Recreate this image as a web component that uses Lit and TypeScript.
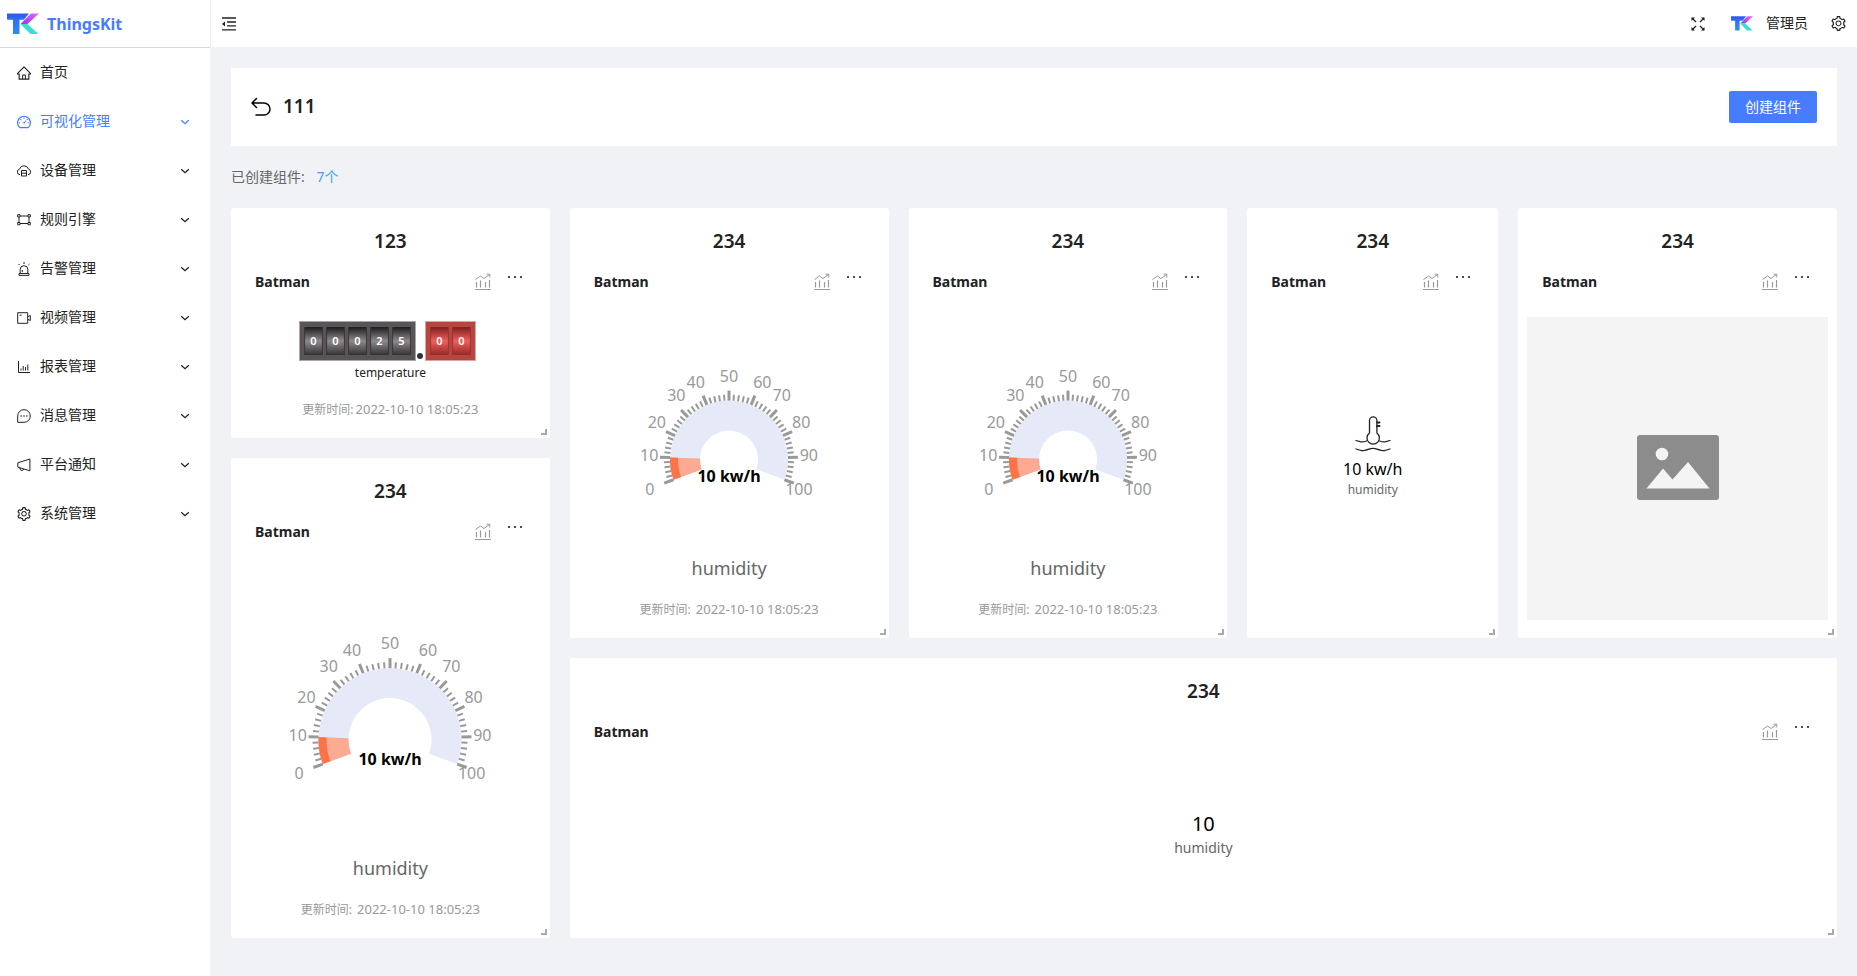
import { LitElement, html, svg, css, nothing } from "lit";
import { customElement, property } from "lit/decorators.js";

const VB = "64 64 896 896";
const P: Record<string, string> = {
  home: "M946.5 505L560.1 118.8l-25.9-25.9a31.5 31.5 0 00-44.4 0L77.5 505a63.9 63.9 0 00-18.8 46c.4 35.2 29.7 63.3 64.9 63.3h42.5V940h691.8V614.3h43.4c17.1 0 33.2-6.7 45.3-18.8a63.6 63.6 0 0018.7-45.3c0-17-6.7-33.1-18.8-45.2zM568 868H456V664h112v204zm217.9-325.7V868H632V640c0-22.1-17.9-40-40-40H432c-22.1 0-40 17.9-40 40v228H238.1V542.3h-96l370-369.7 23.1 23.1L882 542.3h-96.1z",
  dash: "M924.8 385.6a446.7 446.7 0 00-96-142.4 446.7 446.7 0 00-142.4-96C631.1 123.8 572.5 112 512 112s-119.1 11.8-174.4 35.2a446.7 446.7 0 00-142.4 96 446.7 446.7 0 00-96 142.4C75.8 440.9 64 499.5 64 560c0 132.7 58.3 257.7 159.9 343.1l1.7 1.4c5.8 4.8 13.1 7.5 20.6 7.5h531.7c7.5 0 14.8-2.7 20.6-7.5l1.7-1.4C901.7 817.7 960 692.7 960 560c0-60.5-11.900-119.100-35.200-174.400zM761.400 836H262.600A371.120 371.120 0 01140 560c0-99.400 38.700-192.800 109-263 70.300-70.300 163.700-109 263-109 99.400 0 192.800 38.700 263 109 70.300 70.300 109 163.700 109 263 0 105.600-44.500 205.500-122.600 276zM623.500 421.500a8.030 8.030 0 00-11.300 0L527.700 506c-18.700-5-39.400-.2-54.100 14.500a55.950 55.950 0 000 79.200 55.950 55.950 0 0079.200 0 55.870 55.870 0 0014.500-54.100l84.500-84.500c3.100-3.100 3.100-8.200 0-11.300l-28.300-28.300zM490 320h44c4.400 0 8-3.600 8-8v-80c0-4.400-3.600-8-8-8h-44c-4.400 0-8 3.600-8 8v80c0 4.400 3.600 8 8 8zm260 218v44c0 4.400 3.600 8 8 8h80c4.400 0 8-3.600 8-8v-44c0-4.400-3.600-8-8-8h-80c-4.400 0-8 3.600-8 8zm12.700-197.200l-31.100-31.100a8.030 8.030 0 00-11.300 0l-56.600 56.600a8.030 8.030 0 000 11.300l31.100 31.100c3.100 3.100 8.200 3.100 11.300 0l56.600-56.600c3.100-3.100 3.100-8.200 0-11.300zm-458.600-31.100a8.030 8.030 0 00-11.300 0l-31.100 31.100a8.030 8.030 0 000 11.300l56.600 56.600c3.100 3.100 8.200 3.100 11.300 0l31.100-31.100c3.100-3.100 3.100-8.200 0-11.300l-56.600-56.600zM262 530h-80c-4.400 0-8 3.600-8 8v44c0 4.400 3.600 8 8 8h80c4.400 0 8-3.600 8-8v-44c0-4.400-3.600-8-8-8z",
  gear: "M924.8 625.7l-65.500-56c3.100-19 4.700-38.400 4.700-57.800s-1.600-38.800-4.700-57.800l65.500-56a32.030 32.030 0 009.300-35.200l-.9-2.600a443.740 443.740 0 00-79.700-137.900l-1.800-2.100a32.120 32.120 0 00-35.100-9.500l-81.300 28.900c-30-24.600-63.500-44-99.700-57.600l-15.700-85a32.050 32.050 0 00-25.800-25.700l-2.700-.5c-52.100-9.400-106.900-9.400-159 0l-2.700.5a32.050 32.050 0 00-25.800 25.700l-15.800 85.400a351.860 351.860 0 00-99 57.400l-81.900-29.100a32 32 0 00-35.100 9.500l-1.800 2.100a446.020 446.020 0 00-79.700 137.900l-.9 2.600c-4.500 12.500-.8 26.500 9.300 35.200l66.300 56.600c-3.100 18.800-4.600 38-4.600 57.100 0 19.200 1.500 38.400 4.600 57.100L99 625.500a32.030 32.030 0 00-9.300 35.200l.9 2.600c18.100 50.400 44.900 96.900 79.700 137.900l1.800 2.100a32.120 32.120 0 0035.100 9.500l81.900-29.100c29.800 24.500 63.100 43.900 99 57.400l15.800 85.400a32.050 32.050 0 0025.800 25.700l2.700.5a449.400 449.400 0 00159 0l2.700-.5a32.050 32.050 0 0025.800-25.700l15.700-85a350 350 0 0099.700-57.600l81.300 28.900a32 32 0 0035.100-9.500l1.800-2.100c34.800-41.100 61.600-87.500 79.700-137.900l.9-2.600c4.500-12.300.8-26.300-9.300-35zM788.300 465.900c2.500 15.100 3.800 30.600 3.800 46.100s-1.300 31-3.800 46.100l-6.600 40.100 74.700 63.900a370.030 370.030 0 01-42.600 73.600L721 702.800l-31.400 25.800c-23.900 19.600-50.500 35-79.300 45.800l-38.100 14.300-17.900 97a377.500 377.500 0 01-85 0l-17.900-97.200-37.800-14.500c-28.500-10.800-55-26.200-78.700-45.700l-31.400-25.900-93.400 33.200c-17-22.900-31.200-47.600-42.600-73.600l75.500-64.500-6.500-40c-2.400-14.900-3.700-30.300-3.700-45.500 0-15.300 1.200-30.600 3.700-45.500l6.500-40-75.500-64.500c11.300-26.100 25.600-50.700 42.600-73.600l93.400 33.200 31.400-25.900c23.700-19.500 50.200-34.900 78.700-45.700l37.900-14.300 17.900-97.200c28.100-3.200 56.800-3.200 85 0l17.900 97 38.100 14.300c28.700 10.800 55.400 26.200 79.300 45.800l31.400 25.800 92.800-32.900c17 22.900 31.200 47.600 42.600 73.600L781.800 426l6.500 39.900zM512 326c-97.200 0-176 78.800-176 176s78.800 176 176 176 176-78.800 176-176-78.800-176-176-176zm79.200 255.200A111.600 111.600 0 01512 614c-29.900 0-58-11.700-79.200-32.800A111.600 111.600 0 01400 502c0-29.900 11.700-58 32.800-79.200C454 401.600 482.100 390 512 390c29.900 0 58 11.600 79.200 32.800A111.600 111.600 0 01624 502c0 29.900-11.700 58-32.800 79.200z",
};

/* Line icons on a 14-unit grid */
const L: Record<string, unknown> = {
  cloud: svg`<path d="M3 10.800A2.900 2.900 0 0 1 2.500 5.100a4.700 4.700 0 0 1 9 0A2.900 2.900 0 0 1 11 10.800"/><path d="M4.500 6.500h5v5.500h-5zM4.500 9.200h5"/>`,
  rule: svg`<path d="M3 3h8M3 10.500h8M2 4v5.500M12 4v5.500"/><path d="M.7 1.700h2.300v2.300H.7zM11 1.700h2.300v2.300H11zM.7 9.500h2.300v2.300H.7zM11 9.500h2.300v2.300H11z"/>`,
  alarm: svg`<path d="M2 11.500h10v1.900H2zM3.200 11.500V7.500a3.800 3.800 0 0 1 7.600 0v4M7 0v2M1.500 2l1.200 1.200M12.500 2l-1.200 1.200M5.300 8v2"/>`,
  video: svg`<path d="M.7 1.700h10v10.600H.7zM10.700 5.700l2.600-1.200v5l-2.600-1.200M2.600 4.200h2"/>`,
  report: svg`<path d="M1.500 1v11.500h11.500M4 10.500V8.500M6.200 10.500V6M8.500 10.500V7M10.800 10.500V4.500"/>`,
  message: svg`<path d="M.7 13.300V7A6.300 6.300 0 1 1 7 13.300z"/><path d="M3.500 7h1.200M6.400 7h1.200M9.300 7h1.200" stroke-width="1.400"/>`,
  notice: svg`<path d="M.8 4.800L12.900 1v11.800L.8 9.200zM3 9.800a2 2 0 0 0 3.900 1.200"/>`,
};

const icon = (name: string) =>
  P[name]
    ? html`<svg class="ico" viewBox=${VB} fill="currentColor" aria-hidden="true"><path d=${P[name]}></path></svg>`
    : html`<svg class="ico" viewBox="0 0 14 14" fill="none" stroke="currentColor" aria-hidden="true">${L[name]}</svg>`;

const logo = (cls: string, id: string) => html`<svg class=${cls} viewBox="0 0 32 22" aria-hidden="true">
  <defs>
    <linearGradient id="${id}b" x1="0" y1="0" x2="0" y2="1"><stop offset="0" stop-color="#2f6bf0"/><stop offset="1" stop-color="#2f8cf5"/></linearGradient>
    <linearGradient id="${id}p" x1="0" y1="1" x2="1" y2="0"><stop offset="0" stop-color="#9a2ff5"/><stop offset="1" stop-color="#e06cf8"/></linearGradient>
    <linearGradient id="${id}g" x1="0" y1="0" x2="1" y2="1"><stop offset="0" stop-color="#2be8b8"/><stop offset="1" stop-color="#45d6ee"/></linearGradient>
  </defs>
  <path d="M0 .5h22l-5 6H0z" fill="#2f5fee"/>
  <path d="M6 6h6.500V21H6zM1 4.500h17.500l-2 2H1z" fill="url(#${id}b)"/>
  <path d="M24 .5h8L20.500 11 13.500 11z" fill="url(#${id}p)"/>
  <path d="M13.500 11h7L31.500 21h-8z" fill="url(#${id}g)"/>
</svg>`;

const MENU: [string, string][] = [
  ["home", "首页"], ["dash", "可视化管理"], ["cloud", "设备管理"], ["rule", "规则引擎"], ["alarm", "告警管理"],
  ["video", "视频管理"], ["report", "报表管理"], ["message", "消息管理"], ["notice", "平台通知"], ["gear", "系统管理"],
];

@customElement("tk-gauge")
class TkGauge extends LitElement {
  @property({ type: Number }) height = 236;
  @property({ type: Number }) value = 10;

  static styles = css`
    :host { display: block; }
    svg { display: block; width: 240px; overflow: visible; }
    .label { font-size: 16px; fill: #999; dominant-baseline: central; }
    .detail { font-size: 16px; font-weight: 700; fill: #000; text-anchor: middle; dominant-baseline: central; }
    .tick { stroke: #999; stroke-width: 2; }
    .split { stroke: #999; stroke-width: 3; }
  `;

  private point(cx: number, cy: number, r: number, deg: number): [number, number] {
    const a = (deg * Math.PI) / 180;
    return [cx + r * Math.cos(a), cy - r * Math.sin(a)];
  }

  private band(cx: number, cy: number, outer: number, inner: number, from: number, to: number) {
    const [a, b] = [this.point(cx, cy, outer, from), this.point(cx, cy, outer, to)];
    const [c, d] = [this.point(cx, cy, inner, to), this.point(cx, cy, inner, from)];
    const large = from - to > 180 ? 1 : 0;
    return `M${a}A${outer} ${outer} 0 ${large} 1 ${b}L${c}A${inner} ${inner} 0 ${large} 0 ${d}Z`;
  }

  render() {
    const cx = 120, cy = this.height * 0.6, r = this.height / 4;
    const end = 200 - 2.2 * this.value;
    const ticks = Array.from({ length: 51 }, (_, i) => {
      const deg = 200 - i * 4.4, major = i % 5 === 0;
      const [x1, y1] = this.point(cx, cy, r, deg);
      const [x2, y2] = this.point(cx, cy, r + (major ? 10 : 6), deg);
      return svg`<line class=${major ? "split" : "tick"} x1=${x1} y1=${y1} x2=${x2} y2=${y2}></line>`;
    });
    const labels = Array.from({ length: 11 }, (_, i) => {
      const deg = 200 - i * 22, [x, y] = this.point(cx, cy, r + 30, deg);
      const ux = (x - cx) / (r + 30), uy = (y - cy) / (r + 30);
      const anchor = ux < -0.4 ? "start" : ux > 0.4 ? "end" : "middle";
      return svg`<text class="label" x=${x} y=${y - 1 + (uy < -0.8 ? 6 : 0)} text-anchor=${anchor}>${i * 10}</text>`;
    });
    return html`<svg height=${this.height} role="img" aria-label="10 kw/h">
      <path d=${this.band(cx, cy, r, r - 30, 200, -20)} fill="#e6eaf8"></path>
      <path d=${this.band(cx, cy, r, r - 30, 200, end)} fill="#fcaa92"></path>
      <path d=${this.band(cx, cy, r, r - 8, 200, end)} fill="#fd7347"></path>
      ${ticks}${labels}
      <text class="detail" x=${cx} y=${cy + r * 0.27}>${this.value} kw/h</text>
    </svg>`;
  }
}

@customElement("tk-counter")
class TkCounter extends LitElement {
  static styles = css`
    :host { display: flex; align-items: flex-end; }
    .box { display: flex; gap: 3px; padding: 5px 4px; border: 1px solid #a9a6a8; background: #5a5357; }
    .box.red { background: #b54640; border-color: #dda5a2; }
    .digit {
      width: 19px; height: 28px; box-sizing: border-box; padding-bottom: 1px; display: grid; place-items: center;
      color: #fff; font-size: 11px; font-weight: 600;
      background: linear-gradient(#1c1b1c, #8d8a8c 50%, #343334);
      box-shadow: inset 1px 0 1px #3a3839, inset -1px 0 1px #3a3839;
    }
    .red .digit {
      background: linear-gradient(#7c1f1f, #ee5f5c 50%, #962929);
      box-shadow: inset 1px 0 1px #a13230, inset -1px 0 1px #a13230;
    }
    .dot { width: 6px; height: 6px; margin: 0 2px 2px 1px; border-radius: 50%; background: #333; }
  `;
  render() {
    const cells = (s: string) => [...s].map((c) => html`<span class="digit">${c}</span>`);
    return html`<div class="box">${cells("00025")}</div><span class="dot"></span><div class="box red">${cells("00")}</div>`;
  }
}

type Kind = "counter" | "gauge" | "thermo" | "image" | "text";
interface Widget { title: string; kind: Kind; col: number; row: number; w: number; h: number; }

const WIDGETS: Widget[] = [
  { title: "123", kind: "counter", col: 1, row: 1, w: 5, h: 5 },
  { title: "234", kind: "gauge", col: 6, row: 1, w: 5, h: 9 },
  { title: "234", kind: "gauge", col: 11, row: 1, w: 5, h: 9 },
  { title: "234", kind: "thermo", col: 16, row: 1, w: 4, h: 9 },
  { title: "234", kind: "image", col: 20, row: 1, w: 5, h: 9 },
  { title: "234", kind: "gauge", col: 1, row: 6, w: 5, h: 10 },
  { title: "234", kind: "text", col: 6, row: 10, w: 19, h: 6 },
];

@customElement("tk-card")
class TkCard extends LitElement {
  @property({ attribute: false }) widget!: Widget;

  static styles = css`
    :host { display: flex; flex-direction: column; position: relative; background: #fff; border-radius: 3px; color: #222; }
    h2 { margin: 18px 0 0; font-size: 19px; line-height: 30px; font-weight: 600; text-align: center; }
    .bar { display: flex; justify-content: space-between; align-items: flex-start; height: 48px; padding: 14px 24px 0; box-sizing: border-box; }
    .device { margin-top: 1px; font-size: 14px; line-height: 22px; font-weight: 700; }
    .tools { display: flex; gap: 13px; padding-right: 1px; }
    button { padding: 0; border: 0; background: none; color: inherit; display: block; cursor: pointer; }
    .tools button { align-self: flex-start; }
    .trend { width: 18px; height: 18px; margin-top: 3px; display: block; }
    .more { width: 20px; height: 14px; display: block; }
    .body { flex: 1; min-height: 0; display: flex; flex-direction: column; align-items: center; }
    .gauge { padding-top: 14px; }
    .caption { font-size: 18px; line-height: 28px; color: #666; }
    .time { margin: 0; display: flex; align-items: baseline; font-size: 12px; line-height: 20px; color: #999; }
    .time time { font-size: 13px; }
    .gauge .time { gap: 5px; margin-top: 17px; }
    .counter { padding-top: 17px; }
    .counter tk-counter { margin-right: 6px; }
    .small { font-size: 12px; line-height: 20px; }
    .counter .small { margin-top: 2px; }
    .counter .time { gap: 2px; margin-top: 16px; }
    .center { justify-content: center; color: #666; }
    .thermo { padding-bottom: 26px; }
    .thermo svg { width: 36px; height: 36px; color: #222; }
    .value { font-size: 16px; line-height: 22px; color: #000; }
    .thermo .value { margin-top: 6px; }
    .text { padding-bottom: 24px; }
    .text .value { font-size: 20px; line-height: 28px; }
    .text .unit { font-size: 14px; line-height: 20px; }
    .image { margin: 13px 9px 18px; background: #f4f4f4; justify-content: center; }
    .image svg { width: 82px; height: 65px; padding-bottom: 2px; }
    .grip { position: absolute; right: 3px; bottom: 3px; width: 4px; height: 4px; border: solid #aaa; border-width: 0 2px 2px 0; }
  `;

  private get time() {
    return html`<p class="time"><span>更新时间:</span><time>2022-10-10 18:05:23</time></p>`;
  }

  private body() {
    switch (this.widget.kind) {
      case "counter":
        return html`<div class="body counter"><tk-counter></tk-counter><div class="small">temperature</div>${this.time}</div>`;
      case "gauge":
        return html`<div class="body gauge"><tk-gauge .height=${this.widget.h * 50 - 214}></tk-gauge><div class="caption">humidity</div>${this.time}</div>`;
      case "thermo":
        return html`<div class="body center thermo">
          <svg viewBox="0 0 36 36" fill="none" stroke="currentColor" stroke-width="1.300" stroke-linecap="round" stroke-linejoin="round" aria-hidden="true">
            <path d="M14.500 17V4.500a3.700 3.700 0 0 1 7.400 0V17a6.200 6.200 0 1 1-7.400 0z"/>
            <path d="M22 6.500h2.500M22 10h2.500" stroke-width="2"/>
            <path d="M1 24.500l4 1.200c2 .5 4 .3 6.500-.7M35 24.500l-4 1.200c-2 .5-4 .3-6.500-.7M1 33l5 1.500c1.500.4 3 0 5-.5l5-1.300c1.500-.4 2.500-.4 4 0l5 1.300c2 .5 3.500.9 5 .5l5-1.500"/>
          </svg>
          <div class="value">10 kw/h</div><div class="small">humidity</div></div>`;
      case "image":
        return html`<div class="body image">
          <svg viewBox="0 0 82 65" role="img" aria-label="image"><rect width="82" height="65" rx="3" fill="#8c8c8c"/>
            <circle cx="25" cy="19" r="6.300" fill="#f4f4f4"/><path d="M9.500 53.500L26 33.500l9.500 11L51 27l21.500 26.500z" fill="#f4f4f4"/></svg></div>`;
      default:
        return html`<div class="body center text"><div class="value">10</div><div class="unit">humidity</div></div>`;
    }
  }

  render() {
    return html`
      <h2>${this.widget.title}</h2>
      <div class="bar">
        <span class="device">Batman</span>
        <div class="tools">
          <button aria-label="趋势"><svg class="trend" viewBox="0 0 18 18" fill="none" stroke="#999" aria-hidden="true">
            <path d="M1 16.500h16M2.500 14.500V9M6.500 14.500V7.500M11.500 14.500V9M15.500 14.500V7" stroke-width="1.200"/>
            <path d="M1.500 6.500L6.500 3l3.500 2.500L15.500 1.500M12.500 1.200h3.300v3.300"/></svg></button>
          <button aria-label="更多"><svg class="more" viewBox="0 0 20 14" fill="#222" aria-hidden="true">
            <circle cx="4" cy="7" r="1.100"/><circle cx="10" cy="7" r="1.100"/><circle cx="16" cy="7" r="1.100"/></svg></button>
        </div>
      </div>
      ${this.body()}
      <span class="grip"></span>`;
  }
}

@customElement("app-root")
class AppRoot extends LitElement {
  static styles = css`
    :host {
      display: grid; grid-template-columns: 210px minmax(0, 1fr); min-height: 100vh; background: #f0f2f5; color: #222;
      font-family: "Noto Sans", "Noto Sans CJK SC", sans-serif; font-size: 14px;
    }
    button { font: inherit; color: inherit; padding: 0; border: 0; background: none; cursor: pointer; }
    aside { background: #fff; }
    .brand { display: flex; align-items: center; gap: 8px; height: 47px; padding-left: 7px; border-bottom: 1px solid #d9d9d9; font-size: 16px; font-weight: 700; color: #467dff; }
    .brand svg { width: 32px; height: 22px; }
    nav a { display: flex; align-items: center; height: 49px; padding: 0 20px 0 17px; color: inherit; text-decoration: none; }
    nav a.active { color: #467dff; }
    nav span { flex: 1; margin-left: 9px; padding-bottom: 3px; }
    .ico { width: 14px; height: 14px; display: block; }
    .arrow { width: 10px; height: 10px; }
    header { display: flex; align-items: center; height: 47px; padding: 0 11px 0 10px; background: #fff; border-left: 1px solid #eee; }
    header svg { display: block; }
    .fold { width: 16px; height: 16px; }
    .account { display: flex; align-items: center; margin-left: auto; }
    .account span { padding-bottom: 3px; }
    .full { width: 14px; height: 14px; margin-right: 26px; }
    .avatar { width: 22px; height: 17px; margin-right: 13px; }
    .account .set { margin-left: 23px; }
    .account .set .ico { width: 15px; height: 15px; }
    main { padding: 21px 20px 38px 21px; }
    .top { display: flex; align-items: center; height: 78px; padding: 0 20px; background: #fff; }
    .top h1 { margin: 0 auto 0 12px; padding-bottom: 2px; font-size: 19px; font-weight: 600; }
    .back svg { width: 20px; height: 20px; display: block; }
    .create { width: 88px; height: 32px; padding-bottom: 2px; border-radius: 2px; background: #467dff; color: #fff; }
    .count { margin: 19px 0 20px; line-height: 23px; color: #666; }
    .count b { margin-left: 8px; font-weight: 400; color: #409eff; }
    .grid { display: grid; grid-template-columns: repeat(24, minmax(0, 1fr)); grid-auto-rows: 30px; gap: 20px; }
  `;

  render() {
    return html`
      <aside>
        <div class="brand">${logo("", "a")}<span>ThingsKit</span></div>
        <nav>
          ${MENU.map(([name, label], i) => html`<a href="#" class=${i === 1 ? "active" : ""}>${icon(name)}<span>${label}</span>
            ${i ? html`<svg class="arrow" viewBox="0 0 10 10" fill="none" stroke="currentColor" stroke-width="1.300" aria-hidden="true"><path d="M1.200 3.200L5 6.700l3.800-3.500"/></svg>` : nothing}</a>`)}
        </nav>
      </aside>
      <div>
        <header>
          <button aria-label="折叠菜单"><svg class="fold" viewBox="0 0 16 16" stroke="#222" stroke-width="1.300" aria-hidden="true">
            <path d="M1 2h14M6 6h9M6 9.800h9M1 13.800h14" fill="none"/><path d="M1 8l3-2.400v4.800z" fill="#222" stroke="none"/></svg></button>
          <div class="account">
            <button aria-label="全屏"><svg class="full" viewBox="0 0 14 14" fill="none" stroke="#222" stroke-width="1.200" aria-hidden="true">
              <path d="M1 1l4 4M13 1L9 5M1 13l4-4M13 13l-4-4"/><path d="M.5.500h3.500L.5 4zM13.500.500H10L13.500 4zM.5 13.500h3.500L.5 10zM13.500 13.500H10L13.500 10z" fill="#222" stroke="none"/></svg></button>
            ${logo("avatar", "s")}<span>管理员</span>
            <button class="set" aria-label="设置">${icon("gear")}</button>
          </div>
        </header>
        <main>
          <section class="top">
            <button class="back" aria-label="返回"><svg viewBox="0 0 20 20" fill="none" stroke="#000" stroke-width="1.500" stroke-linecap="round" stroke-linejoin="round" aria-hidden="true">
              <path d="M5.500 1.500L1 6l4.500 4.500M1 6h12a6 6 0 0 1 0 12H5"/></svg></button>
            <h1>111</h1>
            <button class="create">创建组件</button>
          </section>
          <p class="count">已创建组件: <b>7个</b></p>
          <div class="grid">
            ${WIDGETS.map((w) => html`<tk-card .widget=${w} style="grid-area: ${w.row} / ${w.col} / span ${w.h} / span ${w.w}"></tk-card>`)}
          </div>
        </main>
      </div>`;
  }
}
